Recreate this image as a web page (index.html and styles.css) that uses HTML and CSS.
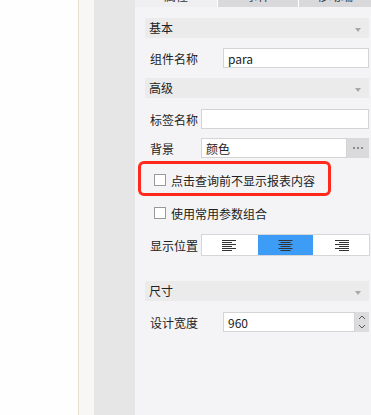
FILE: index.html
```html
<!DOCTYPE html>
<html lang="zh-CN">
<head>
    <meta charset="UTF-8">
    <meta name="viewport" content="width=device-width, initial-scale=1.0">
    <title>参数面板属性</title>
    <link rel="stylesheet" href="styles.css">
</head>
<body>
    <div class="screen">
        <div class="canvas"></div>
        <div class="ruler"></div>
        <div class="gutter"></div>

        <div class="panel">
            <div class="tabs">
                <div class="tab active">属性</div>
                <div class="tab">事件</div>
                <div class="tab">移动端</div>
            </div>

            <div class="props">
                <div class="section">基本<span class="arrow"></span></div>
                <div class="row first">
                    <label class="label wide">组件名称</label>
                    <input class="field" type="text" value="para">
                </div>

                <div class="section gap-10">高级<span class="arrow"></span></div>
                <div class="row gap-11">
                    <label class="label">标签名称</label>
                    <input class="field" type="text" value="">
                </div>
                <div class="row gap-9">
                    <label class="label">背景</label>
                    <div class="combo">
                        <input class="field" type="text" value="颜色">
                        <span class="more"><i></i><i></i><i></i></span>
                    </div>
                </div>

                <div class="check-row marked">
                    <span class="box"></span>点击查询前不显示报表内容
                    <span class="mark"></span>
                </div>
                <div class="check-row gap-13">
                    <span class="box"></span>使用常用参数组合
                </div>

                <div class="row align-row">
                    <label class="label">显示位置</label>
                    <div class="segments">
                        <div class="segment">
                            <svg width="15" height="11" viewBox="0 0 15 11">
                                <path d="M0 0.5h14M0 2.5h10M0 4.5h14M0 6.5h10M0 8.5h14M0 10.5h10" stroke="#333" stroke-width="1"/>
                            </svg>
                        </div>
                        <div class="segment selected">
                            <svg width="15" height="11" viewBox="0 0 15 11">
                                <path d="M0.5 0.5h14M2.5 2.5h10M0.5 4.5h14M2.5 6.5h10M0.5 8.5h14M2.5 10.5h10" stroke="#333" stroke-width="1"/>
                            </svg>
                        </div>
                        <div class="segment">
                            <svg width="15" height="11" viewBox="0 0 15 11">
                                <path d="M1 0.5h14M5 2.5h10M1 4.5h14M5 6.5h10M1 8.5h14M5 10.5h10" stroke="#333" stroke-width="1"/>
                            </svg>
                        </div>
                    </div>
                </div>

                <div class="section gap-25">尺寸<span class="arrow"></span></div>
                <div class="row gap-11">
                    <label class="label wide">设计宽度</label>
                    <div class="combo">
                        <input class="field" type="text" value="960">
                        <span class="spin">
                            <svg width="10" height="18" viewBox="0 0 10 18">
                                <path d="M2 6l3-3 3 3M2 12l3 3 3-3" fill="none" stroke="#555" stroke-width="1"/>
                            </svg>
                        </span>
                    </div>
                </div>
            </div>
        </div>
    </div>
</body>
</html>
```

FILE: styles.css
```css
body {
    margin: 0;
    font-family: "Noto Sans CJK SC", "Noto Sans", sans-serif;
    font-size: 12px;
    color: #222;
    background-color: #fefefe;
}

.screen {
    display: flex;
    height: 415px;
    overflow: hidden;
}

.canvas {
    width: 78px;
    flex-shrink: 0;
    background-color: #fefefe;
}

.ruler {
    width: 15px;
    flex-shrink: 0;
    border-left: 1px solid #e8dfcf;
    background-color: #f8f7f5;
}

.gutter {
    width: 41px;
    flex-shrink: 0;
    background-color: #e6e6e6;
}

.panel {
    flex: 1;
    min-width: 0;
    background-color: #f4f4f6;
}

.tabs {
    display: flex;
    height: 23px;
    margin-top: -16px;
}

.tab {
    width: 80px;
    background-color: #d9d9dc;
    border-left: 1px solid #fff;
    text-align: center;
    line-height: 23px;
    color: #333;
}

.tab.active {
    width: 82px;
    border-left: none;
    background-color: #efeff1;
}

.tab:last-child {
    flex: 1;
}

.props {
    display: flex;
    flex-direction: column;
    padding: 0 2px 0 10px;
}

.section {
    position: relative;
    height: 20px;
    margin-top: 11px;
    padding-left: 4px;
    line-height: 20px;
    background-color: #ebebeb;
}

.arrow {
    position: absolute;
    right: 8px;
    top: 10px;
    border-left: 3px solid transparent;
    border-right: 3px solid transparent;
    border-top: 4px solid #a8a8a8;
}

.row {
    display: flex;
    align-items: center;
    height: 20px;
    padding-left: 5px;
}

.first,
.gap-10 {
    margin-top: 10px;
}

.gap-11 {
    margin-top: 11px;
}

.gap-9 {
    margin-top: 9px;
}

.gap-13 {
    margin-top: 13px;
}

.gap-25 {
    margin-top: 25px;
}

.label {
    width: 51px;
    flex-shrink: 0;
}

.label.wide {
    width: 73px;
}

.field {
    flex: 1;
    min-width: 0;
    height: 20px;
    box-sizing: border-box;
    margin: 0;
    padding: 0 4px;
    border: 1px solid #d4d4d4;
    background-color: #fff;
    font-family: inherit;
    font-size: 12px;
    color: #222;
    outline: none;
}

.combo {
    flex: 1;
    min-width: 0;
    display: flex;
    height: 20px;
}

.more {
    width: 22px;
    flex-shrink: 0;
    display: flex;
    justify-content: center;
    align-items: center;
    gap: 2px;
    background-color: #dadadc;
}

.more i {
    width: 2px;
    height: 2px;
    background-color: #8c8c8c;
}

.spin {
    width: 14px;
    flex-shrink: 0;
    display: flex;
    justify-content: center;
    align-items: center;
    background-color: #dcdcde;
}

.check-row {
    position: relative;
    display: flex;
    align-items: center;
    height: 20px;
    padding-left: 9px;
}

.check-row.marked {
    margin-top: 12px;
}

.box {
    width: 12px;
    height: 12px;
    box-sizing: border-box;
    margin-right: 5px;
    border: 1px solid #999;
    background-color: #fff;
}

.mark {
    position: absolute;
    left: -7px;
    top: -9px;
    width: 193px;
    height: 35px;
    box-sizing: border-box;
    border: 3px solid #ff2a1c;
    border-radius: 6px;
}

.align-row {
    height: 22px;
    margin-top: 11px;
}

.segments {
    flex: 1;
    display: flex;
    height: 22px;
    box-sizing: border-box;
    margin-right: -1px;
    border: 1px solid #d6d6da;
    background-color: #fff;
}

.segment {
    flex: 1;
    display: flex;
    justify-content: center;
    align-items: center;
}

.segment.selected {
    background-color: #3d9cf5;
}
```
